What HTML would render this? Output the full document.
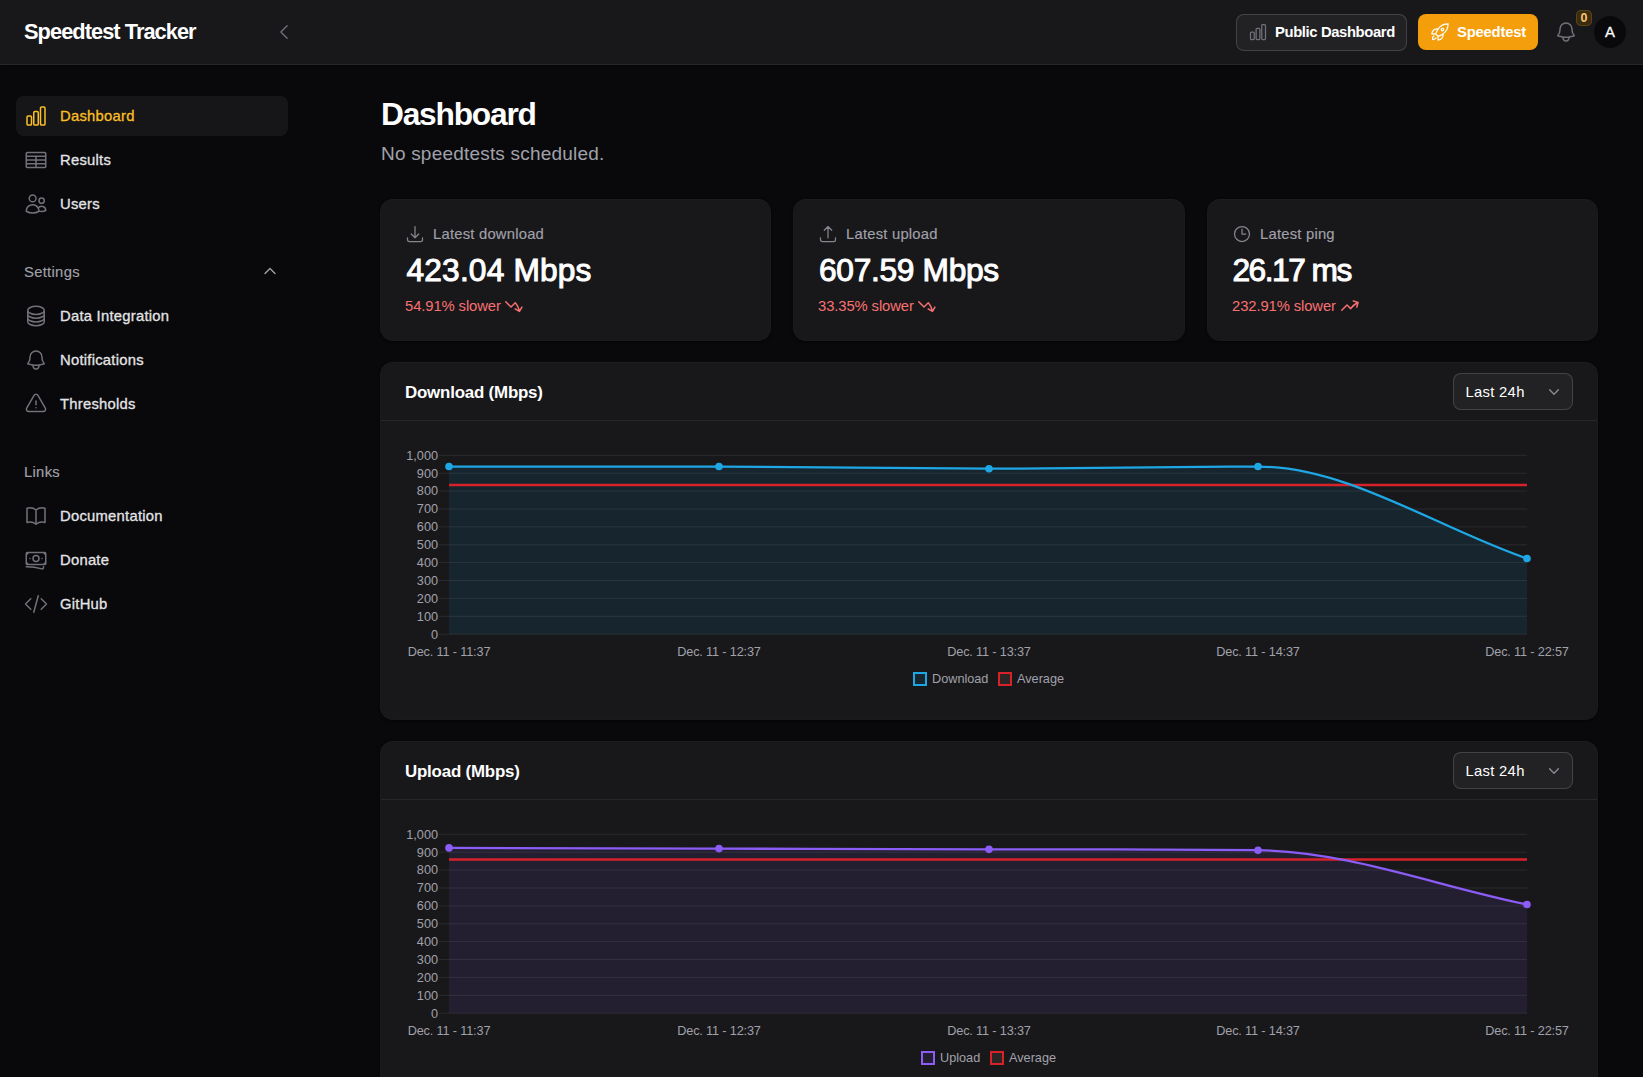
<!DOCTYPE html>
<html><head><meta charset="utf-8">
<style>
*{box-sizing:border-box;margin:0;padding:0}
html,body{width:1643px;height:1077px;overflow:hidden;background:#09090b;font-family:"Liberation Sans",sans-serif;color:#fff}
.abs{position:absolute}
svg{display:block}
.tx{position:absolute;line-height:1;white-space:nowrap}
.card{position:absolute;background:#18181b;border-radius:12px;box-shadow:0 0 0 1px rgba(255,255,255,0.09),0 1px 3px 1px rgba(0,0,0,0.6)}
.btn{position:absolute;border-radius:8px}
</style></head><body>
<div class="abs" style="left:0;top:0;width:1643px;height:65px;background:#18181b;border-bottom:1px solid #27272a;box-shadow:0 1px 3px rgba(0,0,0,0.4)"></div>
<div class="tx" id="logo" style="left:24px;top:20.85px;font-size:21.8px;font-weight:700;color:#fff;letter-spacing:-0.95px;">Speedtest Tracker</div>
<svg class="abs" style="left:274px;top:22px" width="20" height="20" viewBox="0 0 24 24" fill="none" stroke="#71717a" stroke-width="1.5" stroke-linecap="round" stroke-linejoin="round"><path d="M15.75 19.5 8.25 12l7.5-7.5"/></svg>
<div class="btn" style="left:1236px;top:14px;width:171px;height:37px;background:#222225;box-shadow:inset 0 0 0 1px #424247"></div>
<svg class="abs" style="left:1248px;top:22px" width="20" height="20" viewBox="0 0 24 24" fill="none" stroke="#71717a" stroke-width="1.5" stroke-linecap="round" stroke-linejoin="round"><path d="M3 13.125C3 12.504 3.504 12 4.125 12h2.25c.621 0 1.125.504 1.125 1.125v6.75C7.5 20.496 6.996 21 6.375 21h-2.25A1.125 1.125 0 0 1 3 19.875v-6.75ZM9.75 8.625c0-.621.504-1.125 1.125-1.125h2.25c.621 0 1.125.504 1.125 1.125v11.25c0 .621-.504 1.125-1.125 1.125h-2.25a1.125 1.125 0 0 1-1.125-1.125V8.625ZM16.5 4.125c0-.621.504-1.125 1.125-1.125h2.25C20.496 3 21 3.504 21 4.125v15.75c0 .621-.504 1.125-1.125 1.125h-2.25a1.125 1.125 0 0 1-1.125-1.125V4.125Z"/></svg>
<div class="tx" id="pd" style="left:1275px;top:25.07px;font-size:14.8px;font-weight:700;color:#fff;letter-spacing:-0.37px;">Public Dashboard</div>
<div class="btn" style="left:1418px;top:14px;width:120px;height:36px;background:#f59e0b"></div>
<svg class="abs" style="left:1430px;top:22px" width="20" height="20" viewBox="0 0 24 24" fill="none" stroke="#fff" stroke-width="1.5" stroke-linecap="round" stroke-linejoin="round"><path d="M15.59 14.37a6 6 0 0 1-5.84 7.38v-4.8m5.84-2.58a14.98 14.98 0 0 0 6.16-12.12A14.98 14.98 0 0 0 9.631 8.41m5.96 5.96a14.926 14.926 0 0 1-5.841 2.58m-.119-8.54a6 6 0 0 0-7.381 5.84h4.8m2.581-5.84a14.927 14.927 0 0 0-2.58 5.84m2.699 2.7c-.103.021-.207.041-.311.06a15.09 15.09 0 0 1-2.448-2.448 14.9 14.9 0 0 1 .06-.312m-2.24 2.39a4.493 4.493 0 0 0-1.757 4.306 4.493 4.493 0 0 0 4.306-1.758M16.5 9a1.5 1.5 0 1 1-3 0 1.5 1.5 0 0 1 3 0Z"/></svg>
<div class="tx" id="st" style="left:1457px;top:25.07px;font-size:14.8px;font-weight:700;color:#fff;letter-spacing:-0.2px;">Speedtest</div>
<svg class="abs" style="left:1554px;top:20px" width="24" height="24" viewBox="0 0 24 24" fill="none" stroke="#71717a" stroke-width="1.5" stroke-linecap="round" stroke-linejoin="round"><path d="M14.857 17.082a23.848 23.848 0 0 0 5.454-1.31A8.967 8.967 0 0 1 18 9.75V9A6 6 0 0 0 6 9v.75a8.967 8.967 0 0 1-2.312 6.022c1.733.64 3.56 1.085 5.455 1.31m5.714 0a24.255 24.255 0 0 1-5.714 0m5.714 0a3 3 0 1 1-5.714 0"/></svg>
<div class="abs" style="left:1576px;top:10px;width:16px;height:16px;border-radius:5px;background:#3a2c10;box-shadow:inset 0 0 0 1px #5a4416"></div>
<div class="tx" id="badge" style="left:1580.5px;top:11.82px;font-size:12.5px;font-weight:700;color:#f9c66a;">0</div>
<div class="abs" style="left:1594px;top:16px;width:32px;height:32px;border-radius:50%;background:#09090b"></div>
<div class="tx" id="av" style="left:1605px;top:24.97px;font-size:14.8px;font-weight:400;color:#fff;-webkit-text-stroke:0.3px #fff;">A</div>
<div class="btn" style="left:16px;top:96px;width:272px;height:40px;background:#161618"></div>
<svg class="abs" style="left:24px;top:104px" width="24" height="24" viewBox="0 0 24 24" fill="none" stroke="#fbbf24" stroke-width="1.5" stroke-linecap="round" stroke-linejoin="round"><path d="M3 13.125C3 12.504 3.504 12 4.125 12h2.25c.621 0 1.125.504 1.125 1.125v6.75C7.5 20.496 6.996 21 6.375 21h-2.25A1.125 1.125 0 0 1 3 19.875v-6.75ZM9.75 8.625c0-.621.504-1.125 1.125-1.125h2.25c.621 0 1.125.504 1.125 1.125v11.25c0 .621-.504 1.125-1.125 1.125h-2.25a1.125 1.125 0 0 1-1.125-1.125V8.625ZM16.5 4.125c0-.621.504-1.125 1.125-1.125h2.25C20.496 3 21 3.504 21 4.125v15.75c0 .621-.504 1.125-1.125 1.125h-2.25a1.125 1.125 0 0 1-1.125-1.125V4.125Z"/></svg>
<div class="tx" id="nav96" style="left:60px;top:109.27px;font-size:14.8px;font-weight:400;color:#fbbf24;letter-spacing:0.25px;-webkit-text-stroke:0.3px #fbbf24;">Dashboard</div>
<svg class="abs" style="left:24px;top:148px" width="24" height="24" viewBox="0 0 24 24" fill="none" stroke="#71717a" stroke-width="1.5" stroke-linecap="round" stroke-linejoin="round"><path d="M3.375 19.5h17.25m-17.25 0a1.125 1.125 0 0 1-1.125-1.125M3.375 19.5h7.5c.621 0 1.125-.504 1.125-1.125m-9.75 0V5.625m0 12.75v-1.5c0-.621.504-1.125 1.125-1.125m18.375 2.625V5.625m0 12.75c0 .621-.504 1.125-1.125 1.125m1.125-1.125v-1.5c0-.621-.504-1.125-1.125-1.125m0 3.75h-7.5A1.125 1.125 0 0 1 12 18.375m9.75-12.75c0-.621-.504-1.125-1.125-1.125H3.375c-.621 0-1.125.504-1.125 1.125m19.5 0v1.5c0 .621-.504 1.125-1.125 1.125M2.25 5.625v1.5c0 .621.504 1.125 1.125 1.125m0 0h17.25m-17.25 0h7.5c.621 0 1.125.504 1.125 1.125M3.375 8.25c-.621 0-1.125.504-1.125 1.125v1.5c0 .621.504 1.125 1.125 1.125m17.25-3.75h-7.5c-.621 0-1.125.504-1.125 1.125m8.625-1.125c.621 0 1.125.504 1.125 1.125v1.5c0 .621-.504 1.125-1.125 1.125m-17.25 0h7.5m-7.5 0c-.621 0-1.125.504-1.125 1.125v1.5c0 .621.504 1.125 1.125 1.125M12 10.875v-1.5m0 1.5c0 .621-.504 1.125-1.125 1.125M12 10.875c0 .621.504 1.125 1.125 1.125m-2.25 0c.621 0 1.125.504 1.125 1.125M13.125 12h7.5m-7.5 0c-.621 0-1.125.504-1.125 1.125M20.625 12c.621 0 1.125.504 1.125 1.125v1.5c0 .621-.504 1.125-1.125 1.125m-17.25 0h7.5M12 14.625v-1.5m0 1.5c0 .621-.504 1.125-1.125 1.125M12 14.625c0 .621.504 1.125 1.125 1.125m-2.25 0c.621 0 1.125.504 1.125 1.125m0 1.5v-1.5m0 0c0-.621.504-1.125 1.125-1.125m0 0h7.5"/></svg>
<div class="tx" id="nav140" style="left:60px;top:153.27px;font-size:14.8px;font-weight:400;color:#e4e4e7;letter-spacing:0.25px;-webkit-text-stroke:0.3px #e4e4e7;">Results</div>
<svg class="abs" style="left:24px;top:192px" width="24" height="24" viewBox="0 0 24 24" fill="none" stroke="#71717a" stroke-width="1.5" stroke-linecap="round" stroke-linejoin="round"><path d="M15 19.128a9.38 9.38 0 0 0 2.625.372 9.337 9.337 0 0 0 4.121-.952 4.125 4.125 0 0 0-7.533-2.493M15 19.128v-.003c0-1.113-.285-2.16-.786-3.07M15 19.128v.106A12.318 12.318 0 0 1 8.624 21c-2.331 0-4.512-.645-6.374-1.766l-.001-.109a6.375 6.375 0 0 1 11.964-3.07M12 6.375a3.375 3.375 0 1 1-6.75 0 3.375 3.375 0 0 1 6.75 0Zm8.25 2.25a2.625 2.625 0 1 1-5.25 0 2.625 2.625 0 0 1 5.25 0Z"/></svg>
<div class="tx" id="nav184" style="left:60px;top:197.27px;font-size:14.8px;font-weight:400;color:#e4e4e7;letter-spacing:0.25px;-webkit-text-stroke:0.3px #e4e4e7;">Users</div>
<svg class="abs" style="left:24px;top:304px" width="24" height="24" viewBox="0 0 24 24" fill="none" stroke="#71717a" stroke-width="1.5" stroke-linecap="round" stroke-linejoin="round"><path d="M20.25 6.375c0 2.278-3.694 4.125-8.25 4.125S3.75 8.653 3.75 6.375m16.5 0c0-2.278-3.694-4.125-8.25-4.125S3.75 4.097 3.75 6.375m16.5 0v11.25c0 2.278-3.694 4.125-8.25 4.125s-8.25-1.847-8.25-4.125V6.375m16.5 0v3.75m-16.5-3.75v3.75m16.5 0v3.75C20.25 16.153 16.556 18 12 18s-8.25-1.847-8.25-4.125v-3.75m16.5 0c0 2.278-3.694 4.125-8.25 4.125s-8.25-1.847-8.25-4.125"/></svg>
<div class="tx" id="nav296" style="left:60px;top:309.27px;font-size:14.8px;font-weight:400;color:#e4e4e7;letter-spacing:0.25px;-webkit-text-stroke:0.3px #e4e4e7;">Data Integration</div>
<svg class="abs" style="left:24px;top:348px" width="24" height="24" viewBox="0 0 24 24" fill="none" stroke="#71717a" stroke-width="1.5" stroke-linecap="round" stroke-linejoin="round"><path d="M14.857 17.082a23.848 23.848 0 0 0 5.454-1.31A8.967 8.967 0 0 1 18 9.75V9A6 6 0 0 0 6 9v.75a8.967 8.967 0 0 1-2.312 6.022c1.733.64 3.56 1.085 5.455 1.31m5.714 0a24.255 24.255 0 0 1-5.714 0m5.714 0a3 3 0 1 1-5.714 0"/></svg>
<div class="tx" id="nav340" style="left:60px;top:353.27px;font-size:14.8px;font-weight:400;color:#e4e4e7;letter-spacing:0.25px;-webkit-text-stroke:0.3px #e4e4e7;">Notifications</div>
<svg class="abs" style="left:24px;top:392px" width="24" height="24" viewBox="0 0 24 24" fill="none" stroke="#71717a" stroke-width="1.5" stroke-linecap="round" stroke-linejoin="round"><path d="M12 9v3.75m-9.303 3.376c-.866 1.5.217 3.374 1.948 3.374h14.71c1.73 0 2.813-1.874 1.948-3.374L13.949 3.378c-.866-1.5-3.032-1.5-3.898 0L2.697 16.126ZM12 15.75h.007v.008H12v-.008Z"/></svg>
<div class="tx" id="nav384" style="left:60px;top:397.27px;font-size:14.8px;font-weight:400;color:#e4e4e7;letter-spacing:0.25px;-webkit-text-stroke:0.3px #e4e4e7;">Thresholds</div>
<svg class="abs" style="left:24px;top:504px" width="24" height="24" viewBox="0 0 24 24" fill="none" stroke="#71717a" stroke-width="1.5" stroke-linecap="round" stroke-linejoin="round"><path d="M12 6.042A8.967 8.967 0 0 0 6 3.75c-1.052 0-2.062.18-3 .512v14.25A8.987 8.987 0 0 1 6 18c2.305 0 4.408.867 6 2.292m0-14.25a8.966 8.966 0 0 1 6-2.292c1.052 0 2.062.18 3 .512v14.25A8.987 8.987 0 0 0 18 18a8.967 8.967 0 0 0-6 2.292m0-14.25v14.25"/></svg>
<div class="tx" id="nav496" style="left:60px;top:509.27px;font-size:14.8px;font-weight:400;color:#e4e4e7;letter-spacing:0.25px;-webkit-text-stroke:0.3px #e4e4e7;">Documentation</div>
<svg class="abs" style="left:24px;top:548px" width="24" height="24" viewBox="0 0 24 24" fill="none" stroke="#71717a" stroke-width="1.5" stroke-linecap="round" stroke-linejoin="round"><path d="M2.25 18.75a60.07 60.07 0 0 1 15.797 2.101c.727.198 1.453-.342 1.453-1.096V18.75M3.75 4.5v.75A.75.75 0 0 1 3 6h-.75m0 0v-.375c0-.621.504-1.125 1.125-1.125H20.25M2.25 6v9m18-10.5v.75c0 .414.336.75.75.75h.75m-1.5-1.5h.375c.621 0 1.125.504 1.125 1.125v9.75c0 .621-.504 1.125-1.125 1.125h-.375m1.5-1.5H21a.75.75 0 0 0-.75.75v.75m0 0H3.75m0 0h-.375a1.125 1.125 0 0 1-1.125-1.125V15m1.5 1.5v-.75A.75.75 0 0 0 3 15h-.75M15 10.5a3 3 0 1 1-6 0 3 3 0 0 1 6 0Zm3 0h.008v.008H18V10.5Zm-12 0h.008v.008H6V10.5Z"/></svg>
<div class="tx" id="nav540" style="left:60px;top:553.27px;font-size:14.8px;font-weight:400;color:#e4e4e7;letter-spacing:0.25px;-webkit-text-stroke:0.3px #e4e4e7;">Donate</div>
<svg class="abs" style="left:24px;top:592px" width="24" height="24" viewBox="0 0 24 24" fill="none" stroke="#71717a" stroke-width="1.5" stroke-linecap="round" stroke-linejoin="round"><path d="M17.25 6.75 22.5 12l-5.25 5.25m-10.5 0L1.5 12l5.25-5.25m7.5-3-4.5 16.5"/></svg>
<div class="tx" id="nav584" style="left:60px;top:597.27px;font-size:14.8px;font-weight:400;color:#e4e4e7;letter-spacing:0.25px;-webkit-text-stroke:0.3px #e4e4e7;">GitHub</div>
<div class="tx" id="settings" style="left:24px;top:265.27px;font-size:14.8px;font-weight:400;color:#a1a1aa;letter-spacing:0.3px;-webkit-text-stroke:0.15px #a1a1aa;">Settings</div>
<svg class="abs" style="left:262px;top:263px" width="16" height="16" viewBox="0 0 24 24" fill="none" stroke="#a1a1aa" stroke-width="2" stroke-linecap="round" stroke-linejoin="round"><path d="m4.5 15.75 7.5-7.5 7.5 7.5"/></svg>
<div class="tx" id="links" style="left:24px;top:465.27px;font-size:14.8px;font-weight:400;color:#a1a1aa;letter-spacing:0.3px;-webkit-text-stroke:0.15px #a1a1aa;">Links</div>
<div class="tx" id="head" style="left:381px;top:99.17px;font-size:31.7px;font-weight:700;color:#fff;letter-spacing:-1.2px;">Dashboard</div>
<div class="tx" id="sub" style="left:381px;top:144.02px;font-size:19px;font-weight:400;color:#a1a1aa;letter-spacing:0.2px;">No speedtests scheduled.</div>
<div class="card" style="left:381px;top:200px;width:389.33px;height:140px"></div>
<svg class="abs" style="left:405px;top:224.3px" width="20" height="20" viewBox="0 0 24 24" fill="none" stroke="#85858d" stroke-width="1.5" stroke-linecap="round" stroke-linejoin="round"><path d="M3 16.5v2.25A2.25 2.25 0 0 0 5.25 21h13.5A2.25 2.25 0 0 0 21 18.75V16.5M16.5 12 12 16.5m0 0L7.5 12m4.5 4.5V3"/></svg>
<div class="tx" id="lbl0" style="left:433px;top:226.77px;font-size:14.8px;font-weight:400;color:#a1a1aa;letter-spacing:0.22px;-webkit-text-stroke:0.15px #a1a1aa;">Latest download</div>
<div class="tx" id="val0" style="left:406.5px;top:255.47px;font-size:31.7px;font-weight:400;color:#fff;letter-spacing:0.17px;-webkit-text-stroke:1px #fff;">423.04 Mbps</div>
<div class="tx" id="desc0" style="left:405px;top:298.77px;font-size:14.8px;font-weight:400;color:#f87171;letter-spacing:-0.1px;">54.91% slower</div>
<svg class="abs" id="arr0" style="left:504px;top:296px" width="20" height="20" viewBox="0 0 20 20" fill="#f87171"><path fill-rule="evenodd" clip-rule="evenodd" d="M1.22 5.222a.75.75 0 0 1 1.06 0L7 9.942l3.768-3.769a.75.75 0 0 1 1.113.058 20.908 20.908 0 0 1 3.813 7.254l1.574-2.727a.75.75 0 1 1 1.3.75l-2.475 4.286a.75.75 0 0 1-1.025.275l-4.287-2.475a.75.75 0 0 1 .75-1.3l2.71 1.565a19.422 19.422 0 0 0-3.013-6.024L7.53 11.533a.75.75 0 0 1-1.06 0l-5.25-5.25a.75.75 0 0 1 0-1.06Z"/></svg>
<div class="card" style="left:794.33px;top:200px;width:389.33px;height:140px"></div>
<svg class="abs" style="left:818px;top:224.3px" width="20" height="20" viewBox="0 0 24 24" fill="none" stroke="#85858d" stroke-width="1.5" stroke-linecap="round" stroke-linejoin="round"><path d="M3 16.5v2.25A2.25 2.25 0 0 0 5.25 21h13.5A2.25 2.25 0 0 0 21 18.75V16.5m-13.5-9L12 3m0 0 4.5 4.5M12 3v13.5"/></svg>
<div class="tx" id="lbl1" style="left:846px;top:226.77px;font-size:14.8px;font-weight:400;color:#a1a1aa;letter-spacing:0.22px;-webkit-text-stroke:0.15px #a1a1aa;">Latest upload</div>
<div class="tx" id="val1" style="left:819px;top:255.47px;font-size:31.7px;font-weight:400;color:#fff;letter-spacing:-0.3px;-webkit-text-stroke:1px #fff;">607.59 Mbps</div>
<div class="tx" id="desc1" style="left:818px;top:298.77px;font-size:14.8px;font-weight:400;color:#f87171;letter-spacing:-0.1px;">33.35% slower</div>
<svg class="abs" id="arr1" style="left:917px;top:296px" width="20" height="20" viewBox="0 0 20 20" fill="#f87171"><path fill-rule="evenodd" clip-rule="evenodd" d="M1.22 5.222a.75.75 0 0 1 1.06 0L7 9.942l3.768-3.769a.75.75 0 0 1 1.113.058 20.908 20.908 0 0 1 3.813 7.254l1.574-2.727a.75.75 0 1 1 1.3.75l-2.475 4.286a.75.75 0 0 1-1.025.275l-4.287-2.475a.75.75 0 0 1 .75-1.3l2.71 1.565a19.422 19.422 0 0 0-3.013-6.024L7.53 11.533a.75.75 0 0 1-1.06 0l-5.25-5.25a.75.75 0 0 1 0-1.06Z"/></svg>
<div class="card" style="left:1207.67px;top:200px;width:389.33px;height:140px"></div>
<svg class="abs" style="left:1232px;top:224.3px" width="20" height="20" viewBox="0 0 24 24" fill="none" stroke="#85858d" stroke-width="1.5" stroke-linecap="round" stroke-linejoin="round"><path d="M12 6v6h4.5m4.5 0a9 9 0 1 1-18 0 9 9 0 0 1 18 0Z"/></svg>
<div class="tx" id="lbl2" style="left:1260px;top:226.77px;font-size:14.8px;font-weight:400;color:#a1a1aa;letter-spacing:0.22px;-webkit-text-stroke:0.15px #a1a1aa;">Latest ping</div>
<div class="tx" id="val2" style="left:1232.5px;top:255.47px;font-size:31.7px;font-weight:400;color:#fff;letter-spacing:-1.5px;-webkit-text-stroke:1px #fff;">26.17 ms</div>
<div class="tx" id="desc2" style="left:1232px;top:298.77px;font-size:14.8px;font-weight:400;color:#f87171;letter-spacing:-0.1px;">232.91% slower</div>
<svg class="abs" id="arr2" style="left:1340px;top:296px" width="20" height="20" viewBox="0 0 20 20" fill="#f87171"><path fill-rule="evenodd" clip-rule="evenodd" d="M12.577 4.878a.75.75 0 0 1 .919-.53l4.78 1.281a.75.75 0 0 1 .531.919l-1.281 4.78a.75.75 0 0 1-1.449-.387l.81-3.022a19.407 19.407 0 0 0-5.594 5.203.75.75 0 0 1-1.139.093L7 10.06l-4.72 4.72a.75.75 0 0 1-1.06-1.061l5.25-5.25a.75.75 0 0 1 1.06 0l3.074 3.073a20.923 20.923 0 0 1 5.545-4.931l-3.042-.815a.75.75 0 0 1-.53-.919Z"/></svg>
<div class="card" style="left:381px;top:363px;width:1216px;height:356px"></div>
<div class="abs" style="left:381px;top:420px;width:1216px;height:1px;background:#27272a"></div>
<div class="tx" id="ct0" style="left:405px;top:384.79px;font-size:16.9px;font-weight:700;color:#fff;letter-spacing:-0.2px;">Download (Mbps)</div>
<div class="btn" style="left:1453px;top:373px;width:120px;height:37px;background:#222225;box-shadow:inset 0 0 0 1px #424247"></div>
<div class="tx" id="sel0" style="left:1465.5px;top:384.57px;font-size:14.8px;font-weight:400;color:#fff;letter-spacing:0.3px;">Last 24h</div>
<svg class="abs" style="left:1547px;top:385px" width="14" height="14" viewBox="0 0 24 24" fill="none" stroke="#8a8a92" stroke-width="2.4" stroke-linecap="round" stroke-linejoin="round"><path d="m19.5 8.25-7.5 7.5-7.5-7.5"/></svg>
<svg class="abs" style="left:0;top:0" width="1643" height="1077" viewBox="0 0 1643 1077"><path d="M449.00,466.57 C539.00,466.57 629.00,466.57 719.00,466.57 C809.00,466.57 899.00,468.72 989.00,468.72 C1078.67,468.72 1168.33,466.57 1258.00,466.57 C1347.67,466.57 1437.33,527.87 1527.00,558.53 L1527,634.20 L449,634.20 Z" fill="#17252f"/><line x1="439" y1="634.2" x2="1527" y2="634.2" stroke="rgba(255,255,255,0.08)" stroke-width="1"/><line x1="439" y1="616.3" x2="1527" y2="616.3" stroke="rgba(255,255,255,0.08)" stroke-width="1"/><line x1="439" y1="598.4" x2="1527" y2="598.4" stroke="rgba(255,255,255,0.08)" stroke-width="1"/><line x1="439" y1="580.5" x2="1527" y2="580.5" stroke="rgba(255,255,255,0.08)" stroke-width="1"/><line x1="439" y1="562.6" x2="1527" y2="562.6" stroke="rgba(255,255,255,0.08)" stroke-width="1"/><line x1="439" y1="544.8" x2="1527" y2="544.8" stroke="rgba(255,255,255,0.08)" stroke-width="1"/><line x1="439" y1="526.9" x2="1527" y2="526.9" stroke="rgba(255,255,255,0.08)" stroke-width="1"/><line x1="439" y1="509.0" x2="1527" y2="509.0" stroke="rgba(255,255,255,0.08)" stroke-width="1"/><line x1="439" y1="491.1" x2="1527" y2="491.1" stroke="rgba(255,255,255,0.08)" stroke-width="1"/><line x1="439" y1="473.2" x2="1527" y2="473.2" stroke="rgba(255,255,255,0.08)" stroke-width="1"/><line x1="439" y1="455.3" x2="1527" y2="455.3" stroke="rgba(255,255,255,0.08)" stroke-width="1"/><line x1="449" y1="485.00" x2="1527" y2="485.00" stroke="#d8222a" stroke-width="2.5"/><path d="M449.00,466.57 C539.00,466.57 629.00,466.57 719.00,466.57 C809.00,466.57 899.00,468.72 989.00,468.72 C1078.67,468.72 1168.33,466.57 1258.00,466.57 C1347.67,466.57 1437.33,527.87 1527.00,558.53" fill="none" stroke="#1ea7e4" stroke-width="2.3"/><circle cx="449" cy="466.57" r="3.8" fill="#1ea7e4"/><circle cx="719" cy="466.57" r="3.8" fill="#1ea7e4"/><circle cx="989" cy="468.72" r="3.8" fill="#1ea7e4"/><circle cx="1258" cy="466.57" r="3.8" fill="#1ea7e4"/><circle cx="1527" cy="558.53" r="3.8" fill="#1ea7e4"/><g font-family="Liberation Sans" font-size="12.7" fill="#a1a1aa" text-anchor="end"><text id="yl0_0" x="438" y="638.5">0</text><text id="yl0_1" x="438" y="620.6">100</text><text id="yl0_2" x="438" y="602.7">200</text><text id="yl0_3" x="438" y="584.8">300</text><text id="yl0_4" x="438" y="566.9">400</text><text id="yl0_5" x="438" y="549.0">500</text><text id="yl0_6" x="438" y="531.2">600</text><text id="yl0_7" x="438" y="513.3">700</text><text id="yl0_8" x="438" y="495.4">800</text><text id="yl0_9" x="438" y="477.5">900</text><text id="yl0_10" x="438" y="459.6">1,000</text></g><g font-family="Liberation Sans" font-size="12.7" fill="#a1a1aa" text-anchor="middle" letter-spacing="-0.15"><text id="xl0_449" x="449" y="655.6">Dec. 11 - 11:37</text><text id="xl0_719" x="719" y="655.6">Dec. 11 - 12:37</text><text id="xl0_989" x="989" y="655.6">Dec. 11 - 13:37</text><text id="xl0_1258" x="1258" y="655.6">Dec. 11 - 14:37</text><text id="xl0_1527" x="1527" y="655.6">Dec. 11 - 22:57</text></g><rect x="914" y="673" width="12" height="12" fill="#17252f" stroke="#1ea7e4" stroke-width="2"/><text id="lg0a" x="932" y="683" font-family="Liberation Sans" font-size="12.7" fill="#a1a1aa">Download</text><rect x="999" y="673" width="12" height="12" fill="#2a2625" stroke="#d8222a" stroke-width="2"/><text id="lg0b" x="1017" y="683" font-family="Liberation Sans" font-size="12.7" fill="#a1a1aa">Average</text></svg>
<div class="card" style="left:381px;top:742px;width:1216px;height:356px"></div>
<div class="abs" style="left:381px;top:799px;width:1216px;height:1px;background:#27272a"></div>
<div class="tx" id="ct1" style="left:405px;top:763.79px;font-size:16.9px;font-weight:700;color:#fff;letter-spacing:-0.2px;">Upload (Mbps)</div>
<div class="btn" style="left:1453px;top:752px;width:120px;height:37px;background:#222225;box-shadow:inset 0 0 0 1px #424247"></div>
<div class="tx" id="sel1" style="left:1465.5px;top:763.57px;font-size:14.8px;font-weight:400;color:#fff;letter-spacing:0.3px;">Last 24h</div>
<svg class="abs" style="left:1547px;top:764px" width="14" height="14" viewBox="0 0 24 24" fill="none" stroke="#8a8a92" stroke-width="2.4" stroke-linecap="round" stroke-linejoin="round"><path d="m19.5 8.25-7.5 7.5-7.5-7.5"/></svg>
<svg class="abs" style="left:0;top:0" width="1643" height="1077" viewBox="0 0 1643 1077"><path d="M449.00,847.90 C539.00,848.13 629.00,848.37 719.00,848.61 C809.00,848.85 899.00,849.30 989.00,849.33 C1078.67,849.35 1168.33,849.33 1258.00,850.22 C1347.67,851.12 1437.33,886.36 1527.00,904.43 L1527,1013.20 L449,1013.20 Z" fill="#231f31"/><line x1="439" y1="1013.2" x2="1527" y2="1013.2" stroke="rgba(255,255,255,0.08)" stroke-width="1"/><line x1="439" y1="995.3" x2="1527" y2="995.3" stroke="rgba(255,255,255,0.08)" stroke-width="1"/><line x1="439" y1="977.4" x2="1527" y2="977.4" stroke="rgba(255,255,255,0.08)" stroke-width="1"/><line x1="439" y1="959.5" x2="1527" y2="959.5" stroke="rgba(255,255,255,0.08)" stroke-width="1"/><line x1="439" y1="941.6" x2="1527" y2="941.6" stroke="rgba(255,255,255,0.08)" stroke-width="1"/><line x1="439" y1="923.8" x2="1527" y2="923.8" stroke="rgba(255,255,255,0.08)" stroke-width="1"/><line x1="439" y1="905.9" x2="1527" y2="905.9" stroke="rgba(255,255,255,0.08)" stroke-width="1"/><line x1="439" y1="888.0" x2="1527" y2="888.0" stroke="rgba(255,255,255,0.08)" stroke-width="1"/><line x1="439" y1="870.1" x2="1527" y2="870.1" stroke="rgba(255,255,255,0.08)" stroke-width="1"/><line x1="439" y1="852.2" x2="1527" y2="852.2" stroke="rgba(255,255,255,0.08)" stroke-width="1"/><line x1="439" y1="834.3" x2="1527" y2="834.3" stroke="rgba(255,255,255,0.08)" stroke-width="1"/><line x1="449" y1="859.52" x2="1527" y2="859.52" stroke="#d8222a" stroke-width="2.5"/><path d="M449.00,847.90 C539.00,848.13 629.00,848.37 719.00,848.61 C809.00,848.85 899.00,849.30 989.00,849.33 C1078.67,849.35 1168.33,849.33 1258.00,850.22 C1347.67,851.12 1437.33,886.36 1527.00,904.43" fill="none" stroke="#8b5cf6" stroke-width="2.3"/><circle cx="449" cy="847.90" r="3.8" fill="#8b5cf6"/><circle cx="719" cy="848.61" r="3.8" fill="#8b5cf6"/><circle cx="989" cy="849.33" r="3.8" fill="#8b5cf6"/><circle cx="1258" cy="850.22" r="3.8" fill="#8b5cf6"/><circle cx="1527" cy="904.43" r="3.8" fill="#8b5cf6"/><g font-family="Liberation Sans" font-size="12.7" fill="#a1a1aa" text-anchor="end"><text id="yl1_0" x="438" y="1017.5">0</text><text id="yl1_1" x="438" y="999.6">100</text><text id="yl1_2" x="438" y="981.7">200</text><text id="yl1_3" x="438" y="963.8">300</text><text id="yl1_4" x="438" y="945.9">400</text><text id="yl1_5" x="438" y="928.0">500</text><text id="yl1_6" x="438" y="910.2">600</text><text id="yl1_7" x="438" y="892.3">700</text><text id="yl1_8" x="438" y="874.4">800</text><text id="yl1_9" x="438" y="856.5">900</text><text id="yl1_10" x="438" y="838.6">1,000</text></g><g font-family="Liberation Sans" font-size="12.7" fill="#a1a1aa" text-anchor="middle" letter-spacing="-0.15"><text id="xl1_449" x="449" y="1034.6">Dec. 11 - 11:37</text><text id="xl1_719" x="719" y="1034.6">Dec. 11 - 12:37</text><text id="xl1_989" x="989" y="1034.6">Dec. 11 - 13:37</text><text id="xl1_1258" x="1258" y="1034.6">Dec. 11 - 14:37</text><text id="xl1_1527" x="1527" y="1034.6">Dec. 11 - 22:57</text></g><rect x="922" y="1052" width="12" height="12" fill="#231f31" stroke="#8b5cf6" stroke-width="2"/><text id="lg1a" x="940" y="1062" font-family="Liberation Sans" font-size="12.7" fill="#a1a1aa">Upload</text><rect x="991" y="1052" width="12" height="12" fill="#2a2625" stroke="#d8222a" stroke-width="2"/><text id="lg1b" x="1009" y="1062" font-family="Liberation Sans" font-size="12.7" fill="#a1a1aa">Average</text></svg>
</body></html>
